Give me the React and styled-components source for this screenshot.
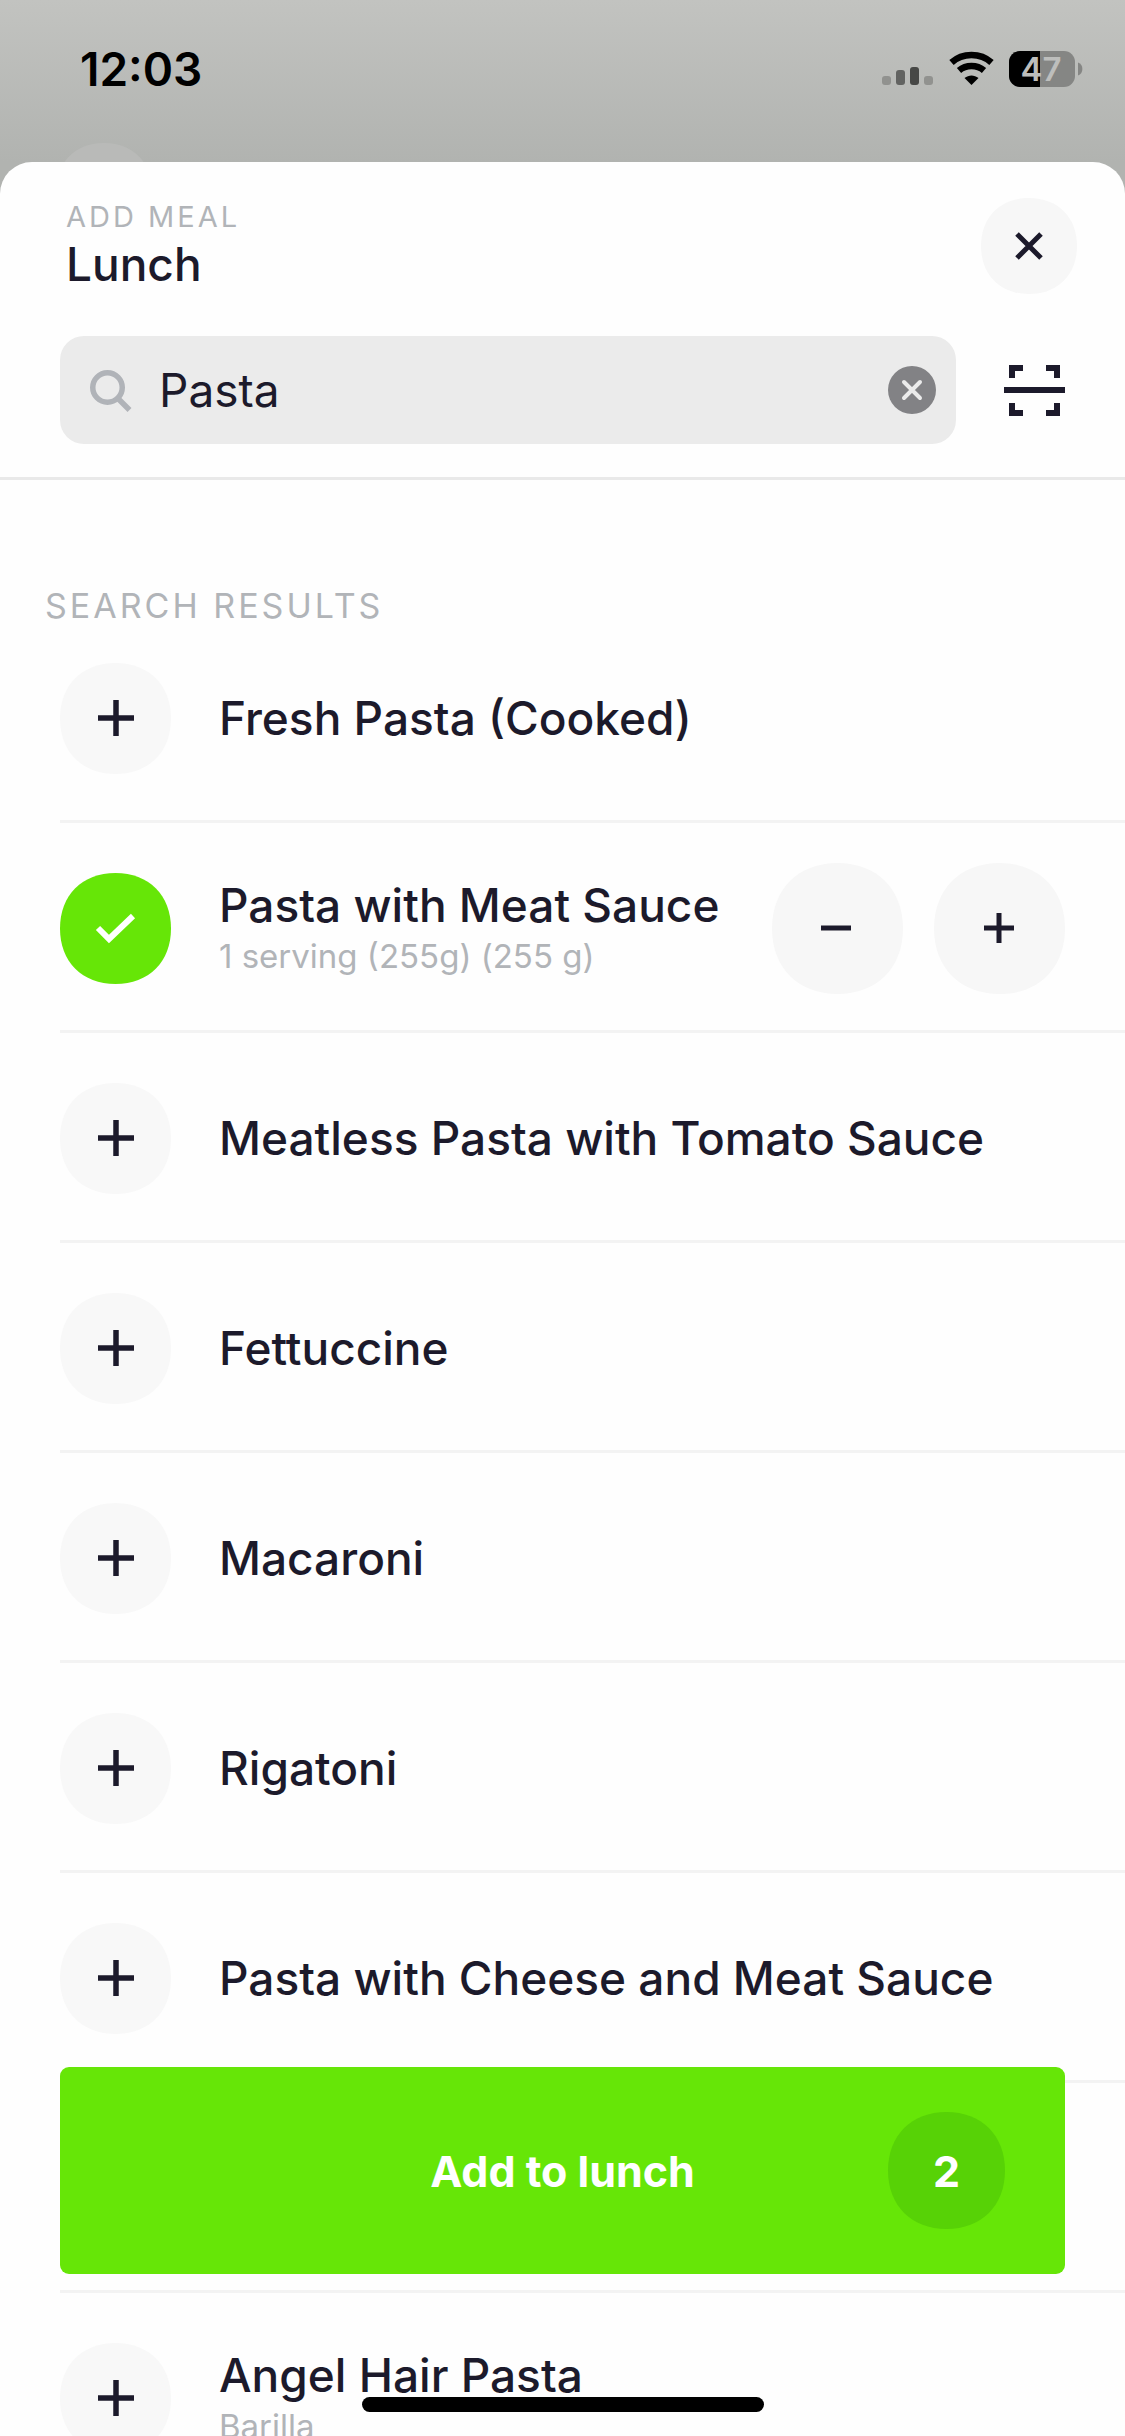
import React, { useState } from 'react';
import styled, { createGlobalStyle } from 'styled-components';

const ink = '#1c1a2b';
const muted = '#b1b4b8';
const green = '#66e607';

const GlobalStyle = createGlobalStyle`
  * {
    box-sizing: border-box;
  }

  body {
    margin: 0;
    color: ${ink};
    font-family: Inter, 'Liberation Sans', sans-serif;
  }

  button {
    display: flex;
    flex-shrink: 0;
    padding: 0;
    border: 0;
    background: none;
    color: inherit;
    font-family: inherit;
    cursor: pointer;
  }

  svg {
    display: block;
    overflow: visible;
  }
`;

/* Page frame and status bar. */

const Screen = styled.div`
  display: flex;
  flex-direction: column;
  height: 100vh;
  overflow: hidden;
  background: linear-gradient(#c2c3c0, #b1b3b0 162px);
`;

const StatusBar = styled.header`
  position: relative;
  display: flex;
  flex-shrink: 0;
  align-items: flex-start;
  justify-content: space-between;
  height: 162px;
  padding: 41px 43px 0 80px;
  overflow: hidden;
`;

const Clock = styled.time`
  color: #000;
  font-size: 46px;
  font-weight: 600;
  line-height: 56px;
`;

const StatusIcons = styled.div`
  display: flex;
  align-items: center;
  gap: 16px;
  padding-top: 10px;
`;

const BehindButton = styled.div`
  position: absolute;
  top: 143px;
  left: 56px;
`;

const Sheet = styled.main`
  display: flex;
  flex: 1;
  flex-direction: column;
  min-height: 0;
  border-radius: 32px 32px 0 0;
  background: #fefefe;
`;

/* Sheet header. */

const SheetTop = styled.div`
  flex-shrink: 0;
  padding: 36px 0 33px;
  border-bottom: 3px solid #e9e9e9;
`;

const Heading = styled.div`
  display: flex;
  align-items: center;
  justify-content: space-between;
  padding: 0 48px 0 66px;
`;

const Eyebrow = styled.p`
  margin: 0;
  color: ${muted};
  font-size: 29px;
  letter-spacing: 3px;
  line-height: 36px;
`;

const MealName = styled.h1`
  margin: 0;
  font-size: 46px;
  font-weight: 500;
  line-height: 58px;
`;

const SearchRow = styled.div`
  display: flex;
  align-items: center;
  gap: 48px;
  padding: 42px 60px 0;
`;

const SearchBox = styled.div`
  display: flex;
  flex: 1;
  align-items: center;
  gap: 26px;
  min-width: 0;
  height: 108px;
  padding: 0 20px 0 30px;
  border-radius: 24px;
  background: #ebebeb;
`;

const SearchInput = styled.input`
  flex: 1;
  min-width: 0;
  padding: 0;
  border: 0;
  outline: 0;
  background: transparent;
  color: ${ink};
  font-family: inherit;
  font-size: 46px;
  line-height: 56px;
`;

/* Results. */

const Results = styled.section`
  flex: 1;
  min-height: 0;
  padding-top: 105px;
  overflow: hidden;
`;

const ResultsTitle = styled.h2`
  margin: 0;
  padding-left: 45px;
  color: ${muted};
  font-size: 34px;
  font-weight: 400;
  letter-spacing: 3px;
  line-height: 42px;
`;

const FoodList = styled.ul`
  margin: 0;
  padding: 0 0 0 60px;
  list-style: none;
`;

const FoodRow = styled.li`
  display: flex;
  align-items: center;
  min-height: 210px;
  padding: 4px 60px 0 0;
  border-bottom: 3px solid #f3f3f3;

  &:first-child {
    min-height: 196px;
    padding: 0 60px 10px 0;
  }
`;

const FoodText = styled.div`
  flex: 1;
  padding: 0 0 2px 48px;
  white-space: nowrap;
`;

const FoodName = styled.h3`
  margin: 0;
  font-size: 46px;
  font-weight: 500;
  line-height: 56px;
`;

const FoodDetail = styled.p`
  margin: 0;
  color: ${muted};
  font-size: 33px;
  line-height: 46px;
`;

const Stepper = styled.div`
  display: flex;
  gap: 31px;
`;

/* Bottom action, it floats over the list. */

const AddButton = styled.button`
  && {
    position: fixed;
    right: 60px;
    bottom: 162px;
    left: 60px;
    display: grid;
    grid-template-columns: 1fr auto 1fr;
    align-items: center;
    height: 207px;
    padding: 0 60px;
    border-radius: 9px;
    background: ${green};
    color: #fff;
    font-size: 43px;
    font-weight: 700;
  }
`;

const AddLabel = styled.span`
  grid-column: 2;
`;

const Count = styled.span`
  display: grid;
  place-items: center;
  justify-self: end;

  > * {
    grid-area: 1 / 1;
  }
`;

const HomeIndicator = styled.div`
  position: fixed;
  bottom: 24px;
  left: 50%;
  width: 402px;
  height: 15px;
  margin-left: -201px;
  border-radius: 8px;
  background: #000;
`;

/* Drawings. */

const Squircle = ({ size, fill, children }) => (
  <svg width={size} height={size} viewBox={`0 0 ${size} ${size}`} aria-hidden="true">
    <svg width={size} height={size} viewBox="0 0 100 100">
      <path d="M0 50C0 20 20 0 50 0S100 20 100 50 80 100 50 100 0 80 0 50Z" fill={fill} />
    </svg>
    {children}
  </svg>
);

const SignalIcon = () => (
  <svg width="51" height="36" viewBox="0 0 51 36" aria-hidden="true">
    <rect y="25" width="9" height="9" rx="3" fill="#91928f" />
    <rect x="14" y="19" width="9" height="15" rx="3" fill="#626361" />
    <rect x="28" y="16" width="9" height="18" rx="3" fill="#474846" />
    <rect x="42" y="25" width="9" height="9" rx="3" fill="#91928f" />
  </svg>
);

const WifiIcon = () => (
  <svg width="44" height="36" viewBox="0 0 44 36" aria-hidden="true">
    <path d="M2.500 11.500C13.500 1.500 31.500 1.500 42.500 11.500" fill="none" stroke="#000" strokeWidth="6.500" />
    <path d="M10 19.500C17 13.500 28 13.500 35 19.500" fill="none" stroke="#000" strokeWidth="6.500" />
    <path d="M15.500 27C20 23.500 25 23.500 29.500 27L22.500 34Z" fill="#000" />
  </svg>
);

const BatteryIcon = () => (
  <svg width="73" height="36" viewBox="0 0 73 36" role="img" aria-label="Battery 47%">
    <rect width="66" height="36" rx="11" fill="#858684" />
    <path d="M11 0H31V36H11A11 11 0 0 1 0 25V11A11 11 0 0 1 11 0Z" fill="#000" />
    <path d="M69 11.500A7 7 0 0 1 69 24.500Z" fill="#858684" />
    <text x="32" y="30" textAnchor="middle" fontSize="33" fontWeight="600" fill="#bdbebc">
      47
    </text>
  </svg>
);

const SearchIcon = () => (
  <svg width="43" height="43" viewBox="0 0 43 43" aria-hidden="true">
    <circle cx="17.500" cy="18.500" r="14.750" fill="none" stroke="#b0b3b8" strokeWidth="5.500" />
    <path d="M28 29.500L39.500 41" stroke="#b0b3b8" strokeWidth="5.500" />
  </svg>
);

const ClearIcon = () => (
  <svg width="48" height="48" viewBox="0 0 48 48" aria-hidden="true">
    <circle cx="24" cy="24" r="24" fill="#828285" />
    <path d="M16 16L32 32M32 16L16 32" stroke="#ebebeb" strokeWidth="4" strokeLinecap="round" />
  </svg>
);

const ScanIcon = () => (
  <svg width="61" height="51" viewBox="0 0 61 51" aria-hidden="true">
    <path
      d="M8 13V3H19M42 3H53V13M8 38V48H19M42 48H53V38M0 25H61"
      fill="none"
      stroke={ink}
      strokeWidth="6"
    />
  </svg>
);

const foods = [
  { id: 1, name: 'Fresh Pasta (Cooked)' },
  { id: 2, name: 'Pasta with Meat Sauce', detail: '1 serving (255g) (255 g)' },
  { id: 3, name: 'Meatless Pasta with Tomato Sauce' },
  { id: 4, name: 'Fettuccine' },
  { id: 5, name: 'Macaroni' },
  { id: 6, name: 'Rigatoni' },
  { id: 7, name: 'Pasta with Cheese and Meat Sauce' },
  { id: 8, name: '' },
  { id: 9, name: 'Angel Hair Pasta', detail: 'Barilla' },
];

const Food = ({ food, selected, onToggle, onStep }) => (
  <FoodRow>
    <button type="button" aria-pressed={selected} aria-label={food.name} onClick={onToggle}>
      <Squircle size={111} fill={selected ? green : '#f8f8f8'}>
        {selected ? (
          <path d="M38 55L49 66L73 43" fill="none" stroke="#fff" strokeWidth="6" />
        ) : (
          <path d="M38 55H74M56 37V73" stroke={ink} strokeWidth="5.500" />
        )}
      </Squircle>
    </button>
    <FoodText>
      <FoodName>{food.name}</FoodName>
      {food.detail && <FoodDetail>{food.detail}</FoodDetail>}
    </FoodText>
    {selected && (
      <Stepper>
        <button type="button" aria-label="Less" onClick={() => onStep(-1)}>
          <Squircle size={131} fill="#f7f7f7">
            <path d="M49 65H79" stroke={ink} strokeWidth="5" />
          </Squircle>
        </button>
        <button type="button" aria-label="More" onClick={() => onStep(1)}>
          <Squircle size={131} fill="#f7f7f7">
            <path d="M50 65H80M65 50V80" stroke={ink} strokeWidth="5" />
          </Squircle>
        </button>
      </Stepper>
    )}
  </FoodRow>
);

const App = () => {
  const [query, setQuery] = useState('Pasta');
  const [selected, setSelected] = useState(2);
  const [count, setCount] = useState(2);

  return (
    <Screen>
      <GlobalStyle />
      <StatusBar>
        <BehindButton>
          <Squircle size={96} fill="#b9bab8" />
        </BehindButton>
        <Clock>12:03</Clock>
        <StatusIcons>
          <SignalIcon />
          <WifiIcon />
          <BatteryIcon />
        </StatusIcons>
      </StatusBar>

      <Sheet>
        <SheetTop>
          <Heading>
            <div>
              <Eyebrow>ADD MEAL</Eyebrow>
              <MealName>Lunch</MealName>
            </div>
            <button type="button" aria-label="Close">
              <Squircle size={96} fill="#f7f7f7">
                <path d="M36 36L60 60M60 36L36 60" stroke={ink} strokeWidth="5" />
              </Squircle>
            </button>
          </Heading>
          <SearchRow>
            <SearchBox>
              <SearchIcon />
              <SearchInput
                type="text"
                aria-label="Search food"
                value={query}
                onChange={(e) => setQuery(e.target.value)}
              />
              <button type="button" aria-label="Clear search" onClick={() => setQuery('')}>
                <ClearIcon />
              </button>
            </SearchBox>
            <button type="button" aria-label="Scan barcode">
              <ScanIcon />
            </button>
          </SearchRow>
        </SheetTop>

        <Results>
          <ResultsTitle>SEARCH RESULTS</ResultsTitle>
          <FoodList>
            {foods.map((food) => (
              <Food
                key={food.id}
                food={food}
                selected={food.id === selected}
                onToggle={() => setSelected(food.id)}
                onStep={(step) => setCount(Math.max(0, count + step))}
              />
            ))}
          </FoodList>
        </Results>
      </Sheet>

      <AddButton type="button">
        <AddLabel>Add to lunch</AddLabel>
        <Count>
          <Squircle size={117} fill="#57d206" />
          <span>{count}</span>
        </Count>
      </AddButton>
      <HomeIndicator />
    </Screen>
  );
};

export default App;
